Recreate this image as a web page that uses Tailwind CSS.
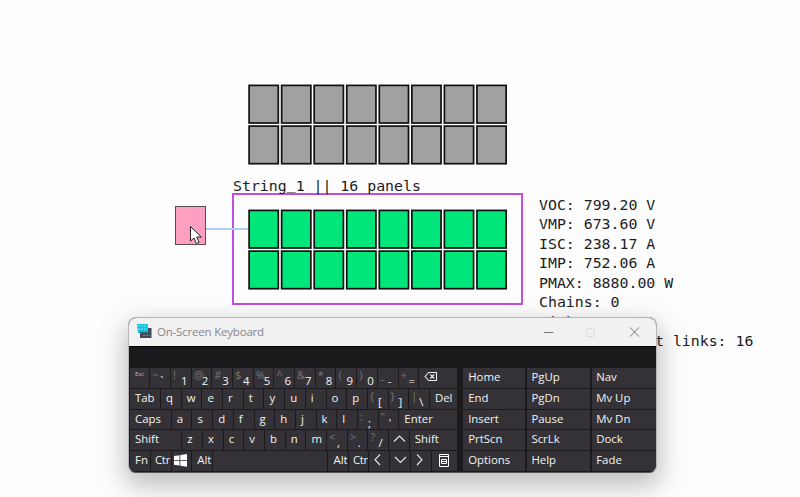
<!DOCTYPE html>
<html lang="en">
<head>
<meta charset="utf-8">
<title>Panel strings</title>
<script src="https://cdn.jsdelivr.net/npm/@tailwindcss/browser@4"></script>
</head>
<body class="relative h-[497px] w-[800px] overflow-hidden bg-[#fefdfe] font-['Open_Sans','Noto_Sans',sans-serif]">

<!-- Canvas -->
<svg id="spare" class="absolute left-[248px] top-[84px]" width="262" height="82"></svg>
<div class="absolute left-[232px] top-[193px] h-[112px] w-[291px] border-2 border-[#c14ede]"></div>
<div class="absolute left-[233px] top-[176px] whitespace-pre font-['DejaVu_Sans_Mono',monospace] text-[14.87px] leading-[20px] text-[#1c1c1c]">String<span class="relative -top-[2px]">_</span>1 || 16 panels</div>
<div class="absolute left-[204px] top-[228px] h-[2px] w-[45px] bg-[#b0cdfb]"></div>
<svg id="active" class="absolute left-[248px] top-[209px]" width="262" height="82"></svg>
<div class="absolute left-[175px] top-[206px] h-[39px] w-[31px] border-[1.5px] border-[#594b50] bg-[#fc9fc0]"></div>
<svg class="absolute left-[189px] top-[225px]" width="15" height="20" viewBox="0 0 15 20"><path d="M1.5 1.5V16L5 13L7.4 18.6L10 17.4L7.7 12.1H12.4Z" fill="#fff" stroke="#222" stroke-width="1"/></svg>

<div class="absolute left-[539px] top-[195.5px] whitespace-pre font-['DejaVu_Sans_Mono',monospace] text-[14.87px] leading-[19.55px] text-[#1c1c1c]"><div>VOC: 799.20 V</div><div>VMP: 673.60 V</div><div>ISC: 238.17 A</div><div>IMP: 752.06 A</div><div>PMAX: 8880.00 W</div><div>Chains: 0</div><div>Links: 0</div><div class="pl-[116px]">t links: 16</div></div>

<!-- Keyboard window -->
<div class="absolute left-[128px] top-[317px] flex h-[156px] w-[529px] flex-col overflow-hidden rounded-[8px] border border-[#b5b4b6] border-b-[#555] bg-[#1b191c] shadow-[0_10px_26px_3px_rgba(0,0,0,0.25)]">
  <div class="flex h-[28px] shrink-0 items-center bg-[#f1f1f1] pl-[7px]">
    <svg class="-mt-[2px]" width="17" height="16" viewBox="0 0 17 16"><path d="M4 5H15.5V15H4Z" fill="#414b55"/><path d="M1 1H12V10H2Z" fill="#19bddd"/><path d="M2 3H12M2 6H12" stroke="#79e8ef" stroke-dasharray="2 1"/><path d="M4 9H13V11H4Z" fill="#26637e"/><path d="M7 12.5H14" stroke="#7c858b" stroke-dasharray="2 1"/></svg>
    <span class="ml-[4px] grow text-[11.5px] tracking-[-0.2px] text-[#88868a]">On-Screen Keyboard</span>
    <svg class="mr-[11px]" width="102" height="14" viewBox="0 0 102 14" fill="none"><path d="M1 7.5H10.5" stroke="#777"/><rect x="43.5" y="3.5" width="8" height="8" rx="1" stroke="#dcdcdc"/><path d="M87 2.5L96 11.5M96 2.5L87 11.5" stroke="#777"/></svg>
  </div>
  <div class="flex grow items-end gap-[5.5px] border-t border-black pb-px pl-px">
    <div id="keys" class="flex w-[328px] flex-col gap-px"></div>
    <div id="nav" class="grid grid-cols-[62px_63.5px_64.5px] gap-x-[1.3px] gap-y-px"></div>
  </div>
</div>

<script>
const fill = (id, color) => {
  let s = '';
  for (let r = 0; r < 2; r++) for (let c = 0; c < 8; c++)
    s += `<rect x="${1.1 + c * 32.55}" y="${1.4 + r * 40.7}" width="29.2" height="37.6" fill="${color}" stroke="#101010" stroke-width="1.7"/>`;
  document.getElementById(id).innerHTML = s;
};
fill('spare', '#a2a0a2');
fill('active', '#00e67b');

const icon = (d, w = 14) => `<svg class="ml-[4px] mt-[3px] shrink-0" width="${w}" height="12" viewBox="0 0 ${w} 12" fill="none" stroke="#e8e8e8" stroke-width="1.1">${d}</svg>`;
const icons = {
  BKSP: icon('<path d="M2 5.5L5.7 1.5H13.5V9.5H5.7Z M7.2 3.5L11.2 7.5M11.2 3.5L7.2 7.5"/>', 15),
  WIN: '<svg class="ml-[2.5px] mt-[3px]" width="13" height="13" viewBox="0 0 13 13" fill="#fff"><path d="M0 2L5.5 1.2V6H0ZM6.3 1.1L13 0V6H6.3ZM0 6.8H5.5V11.6L0 10.8ZM6.3 6.8H13V12.8L6.3 11.7Z"/></svg>',
  UP: icon('<path d="M1 8.5L6.5 3L12 8.5"/>'),
  DOWN: icon('<path d="M1 3L6.5 8.5L12 3"/>'),
  LEFT: icon('<path d="M7 .5L2 5.7L7 11"/>'),
  RIGHT: icon('<path d="M2 .5L7 5.7L2 11"/>'),
  MENU: '<svg class="ml-[7px] mt-[3px]" width="10" height="13" viewBox="0 0 10 13" fill="none" stroke="#fff"><path d="M.5 .5H9.5V12.5H.5ZM0 2.5H10M2.5 5.5H7.5V9.5H2.5ZM2.5 7.5H7.5"/></svg>'
};
const u = 20.7;
const rows = [
  [['Esc', 20.3], ...['~`', '!1', '@2', '#3', '$4', '%5', '^6', '&7', '*8', '(9', ')0', '_-', '+='].map(k => [k, u]), ['BKSP', 38.6]],
  [['Tab', 31], ...[...'qwertyuiop'].map(k => [k, u]), ['{[', u], ['}]', u], ['|\\', u], ['Del', 27.9]],
  [['Caps', 41.8], ...[...'asdfghjkl'].map(k => [k, u]), [':;', u], ['"\'', u], ['Enter', 58.5]],
  [['Shift', 52.3], ...[...'zxcvbnm'].map(k => [k, u]), ['<,', u], ['>.', u], ['?/', u], ['UP', u], ['Shift', 48]],
  [['Fn', 21], ['Ctr', 20.5], ['WIN', 20.8], ['Alt', 20.7], ['', 115.5], ['Alt', 20.5], ['Ctr', 20.5], ['LEFT', u], ['DOWN', u], ['RIGHT', u], ['MENU', 26.4]]
];
const esc = s => s.replace(/&/g, '&amp;').replace(/</g, '&lt;').replace(/>/g, '&gt;');
const face = k => {
  if (icons[k]) return icons[k];
  if (k === 'Esc') return '<span class="pl-[5px] pt-[2px] text-[6px] leading-[8px] text-[#c0bfc1]">Esc</span>';
  if (k.length === 2 && k !== 'Fn')
    return `<span class="w-[8px] pl-[2px] text-[11px] leading-[13px] text-[#77757a]">${esc(k[0])}</span><span class="pl-[2px] pt-[5px] text-[11.4px] leading-[15px]">${esc(k[1])}</span>`;
  return `<span class="${k === 'Ctr' ? 'pl-[4px] tracking-[-0.3px]' : 'pl-[5px]'} pt-[1px] text-[11.4px] leading-[15px]">${k}</span>`;
};
document.getElementById('keys').innerHTML = rows.map(r =>
  `<div class="flex h-[19.8px]">${r.map(([k, w]) =>
    `<div class="shrink-0 pr-px" style="width:${w}px"><div class="flex h-full items-start overflow-hidden bg-[#343236] text-[#f2f2f2]">${face(k)}</div></div>`).join('')}</div>`).join('');
document.getElementById('nav').innerHTML =
  ['Home', 'PgUp', 'Nav', 'End', 'PgDn', 'Mv Up', 'Insert', 'Pause', 'Mv Dn', 'PrtScn', 'ScrLk', 'Dock', 'Options', 'Help', 'Fade']
  .map(k => `<div class="h-[19.8px] bg-[#343236] pl-[4.7px] pt-[1px] text-[11.4px] leading-[15px] text-[#f2f2f2]">${k}</div>`).join('');
</script>
</body>
</html>
